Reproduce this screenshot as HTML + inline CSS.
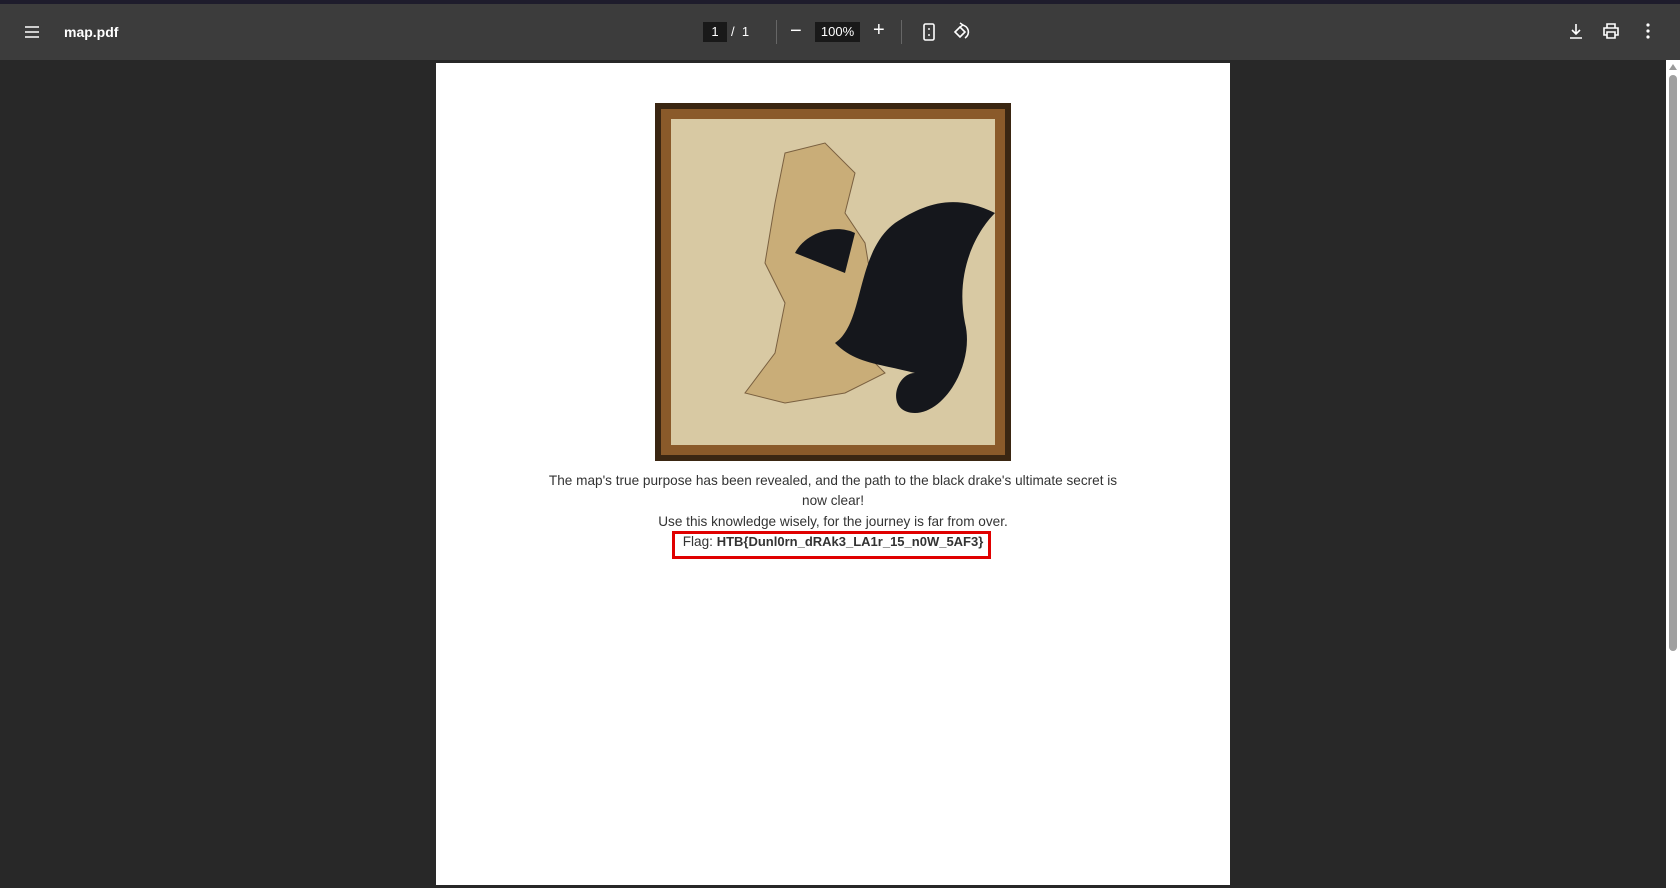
<!DOCTYPE html>
<html><head><meta charset="utf-8"><style>
*{margin:0;padding:0;box-sizing:border-box}
body{width:1680px;height:888px;background:#282828;position:relative;overflow:hidden;font-family:"Liberation Sans",sans-serif}
.top{position:absolute;left:0;top:0;width:1680px;height:4px;background:#1e1c2c}
.bar{position:absolute;left:0;top:4px;width:1680px;height:56px;background:#3c3c3c;color:#fff}
.a{position:absolute}
.page{position:absolute;left:436px;top:63px;width:794px;height:822px;background:#fff}
.txt{position:absolute;left:436px;width:794px;text-align:center;font-family:"Liberation Sans",sans-serif;font-size:13.6px;color:#333}
.sb{position:absolute;left:1666px;top:60px;width:14px;height:828px;background:#fff}
</style></head><body>
<div class="top"></div>
<div class="bar">
 <svg class="a" style="left:24px;top:20px" width="16" height="16" viewBox="0 0 16 16"><path d="M1 3h14M1 8h14M1 13h14" stroke="#fff" stroke-width="1.6"/></svg>
 <div class="a" style="left:64px;top:20px;font-size:14px;font-weight:bold">map.pdf</div>
 <div class="a" style="left:703px;top:18px;width:24px;height:20px;background:#191919;font-size:13px;text-align:center;line-height:20px">1</div>
 <div class="a" style="left:731px;top:18px;font-size:13px;line-height:20px">/&nbsp;&nbsp;1</div>
 <div class="a" style="left:776px;top:16px;width:1px;height:24px;background:#666"></div>
 <div class="a" style="left:790px;top:16px;font-size:20px;line-height:22px">−</div>
 <div class="a" style="left:815px;top:18px;width:45px;height:20px;background:#191919;font-size:13px;text-align:center;line-height:20px">100%</div>
 <div class="a" style="left:873px;top:15px;font-size:20px;line-height:22px">+</div>
 <div class="a" style="left:901px;top:16px;width:1px;height:24px;background:#666"></div>
 <svg class="a" style="left:922px;top:19px" width="14" height="18" viewBox="0 0 14 18"><rect x="2" y="1" width="10" height="16" rx="1.5" fill="none" stroke="#fff" stroke-width="1.6"/><path d="M7 5v2M7 11v2" stroke="#fff" stroke-width="1.4"/></svg>
 <svg class="a" style="left:951px;top:18px" width="20" height="20" viewBox="0 0 20 20"><path d="M4 10l5-5 5 5-5 5z" fill="none" stroke="#fff" stroke-width="1.6"/><path d="M11 3a7 7 0 0 1 3 13" fill="none" stroke="#fff" stroke-width="1.6"/><path d="M9 1l3 2-3 2" fill="none" stroke="#fff" stroke-width="1.4"/></svg>
 <svg class="a" style="left:1568px;top:18px" width="16" height="18" viewBox="0 0 16 18"><path d="M8 2v10M4 8l4 4 4-4M2 16h12" fill="none" stroke="#fff" stroke-width="1.6"/></svg>
 <svg class="a" style="left:1602px;top:18px" width="18" height="18" viewBox="0 0 18 18"><path d="M5 6V2h8v4M5 13H2V6h14v7h-3M5 10h8v6H5z" fill="none" stroke="#fff" stroke-width="1.6"/></svg>
 <svg class="a" style="left:1644px;top:18px" width="8" height="18" viewBox="0 0 8 18"><circle cx="4" cy="3" r="1.6" fill="#fff"/><circle cx="4" cy="9" r="1.6" fill="#fff"/><circle cx="4" cy="15" r="1.6" fill="#fff"/></svg>
</div>
<div class="page"></div>
<svg class="a" style="left:655px;top:103px" width="356" height="358" viewBox="0 0 356 358">
 <rect width="356" height="358" fill="#3a2612"/>
 <rect x="6" y="6" width="344" height="346" fill="#8a5a2a"/>
 <rect x="16" y="16" width="324" height="326" fill="#d8c9a3"/>
 <path d="M130 50l40-10 30 30-10 40 20 30 10 60-20 40 30 30-40 20-60 10-40-10 30-40 10-50-20-40 10-60z" fill="#c9ad78" stroke="#7a6040"/>
 <path d="M180 240c30-20 20-90 60-120 30-20 60-30 100-10-20 20-40 60-30 110 10 40-20 90-50 90-30 0-20-40 0-40-40-10-60-10-80-30z" fill="#15171c"/>
 <path d="M140 150c10-20 40-30 60-20l-10 40z" fill="#15171c"/>
</svg>
<div class="txt" style="top:471px;line-height:20.4px">The map's true purpose has been revealed, and the path to the black drake's ultimate secret is<br>now clear!<br>Use this knowledge wisely, for the journey is far from over.<br>Flag: <b style="font-size:13px">HTB{Dunl0rn_dRAk3_LA1r_15_n0W_5AF3}</b></div>
<div class="a" style="left:672px;top:531px;width:319px;height:28px;border:3px solid #e00000"></div>
<div class="sb"><div class="a" style="left:3px;top:4px;width:0;height:0;border-left:4px solid transparent;border-right:4px solid transparent;border-bottom:6px solid #999"></div><div class="a" style="left:3px;top:15px;width:8px;height:576px;background:#a0a0a0;border-radius:4px"></div></div>
</body></html>
